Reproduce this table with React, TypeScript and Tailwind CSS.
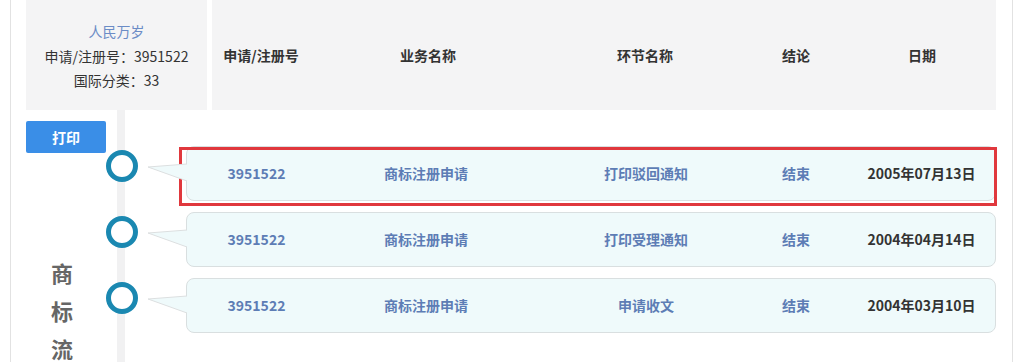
import React from "react";

type Flow = {
  regNo: string;
  business: string;
  step: string;
  result: string;
  date: string;
  marked?: boolean;
};

const flows: Flow[] = [
  { regNo: "3951522", business: "商标注册申请", step: "打印驳回通知", result: "结束", date: "2005年07月13日", marked: true },
  { regNo: "3951522", business: "商标注册申请", step: "打印受理通知", result: "结束", date: "2004年04月14日" },
  { regNo: "3951522", business: "商标注册申请", step: "申请收文", result: "结束", date: "2004年03月10日" },
];

const FlowRow = ({ flow }: { flow: Flow }) => {
  return (
    <div className="flex h-[55px]">
      <div className="w-[32px] shrink-0">
        <div className="relative z-10 mt-[4px] h-[32px] w-[32px] rounded-full border-[5px] border-[#1a88b1] bg-white" />
      </div>
      <svg width="49" height="55" className="relative z-10 -mr-[1px] shrink-0">
        <polygon points="10,21 49,18 49,35" fill="#effafb" />
        <polyline points="49,18 10,21 49,35" fill="none" stroke="#dcdfe0" strokeWidth="1" />
      </svg>
      <div className="relative flex-1 rounded-[8px] border border-[#d9dfe0] bg-[#effafb]">
        <div className="grid h-full grid-cols-[139px_200px_240px_60px_1fr] items-center text-[14px] font-bold text-[#5d7db5]">
          <div className="text-center">{flow.regNo}</div>
          <div className="text-center">{flow.business}</div>
          <div className="text-center">{flow.step}</div>
          <div className="text-center">{flow.result}</div>
          <div className="pl-[22px] text-center text-[#333]">{flow.date}</div>
        </div>
        {flow.marked && (
          <div className="pointer-events-none absolute -left-[8px] -right-[2px] top-0 -bottom-[6px] border-[3px] border-[#e0383d]" />
        )}
      </div>
    </div>
  );
};

const App = () => {
  return (
    <div
      className="h-[362px] w-[1024px] overflow-hidden bg-white"
      style={{ fontFamily: '"Noto Sans CJK SC", "Noto Sans", sans-serif' }}
    >
      <div className="ml-[10px] h-full w-[1003px] border-x border-[#e2e2e2] pl-[15px] pr-[16px]">
        {/* top */}
        <div className="flex h-[110px] gap-[5px]">
          <div className="flex w-[181px] shrink-0 flex-col items-center bg-[#f4f4f5] pt-[19px] text-[14px] leading-[24.5px] text-[#333]">
            <div className="text-[#6b8cc6]">人民万岁</div>
            <div>申请/注册号：3951522</div>
            <div>国际分类：33</div>
          </div>
          <div className="grid flex-1 grid-cols-[98px_236px_198px_104px_1fr] items-center bg-[#f4f4f5] text-[14px] font-bold text-[#333]">
            <div className="text-center">申请/注册号</div>
            <div className="text-center">业务名称</div>
            <div className="text-center">环节名称</div>
            <div className="text-center">结论</div>
            <div className="text-center">日期</div>
          </div>
        </div>

        {/* bottom */}
        <div className="flex">
          <div className="w-[80px] shrink-0 pt-[11px]">
            <button
              type="button"
              className="h-[32px] w-[80px] rounded-[2px] bg-[#3a8ee7] text-[14px] font-bold text-white"
            >
              打印
            </button>
            <div className="ml-[25px] mt-[100px] w-[24px] text-[22px] font-bold leading-[38px] text-[#666]">
              商<br />标<br />流
            </div>
          </div>
          <div className="relative flex-1 pt-[36px]">
            <div className="absolute bottom-0 left-[11px] top-0 -mb-[200px] w-[8px] bg-[#f1f1f2]" />
            <div className="flex flex-col gap-[11px]">
              {flows.map((flow, index) => (
                <FlowRow key={index} flow={flow} />
              ))}
            </div>
          </div>
        </div>
      </div>
    </div>
  );
};

export default App;
